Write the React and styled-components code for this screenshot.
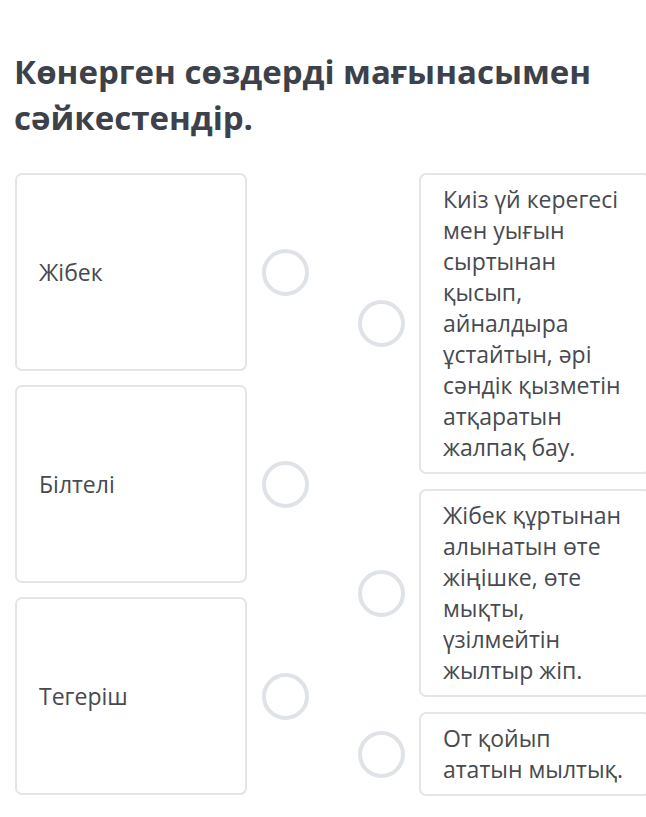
import React from 'react'
import styled, { createGlobalStyle } from 'styled-components'

const words = ['Жібек', 'Білтелі', 'Тегеріш']

const meanings = [
  'Киіз үй керегесі мен уығын сыртынан қысып, айналдыра ұстайтын, әрі сәндік қызметін атқаратын жалпақ бау.',
  'Жібек құртынан алынатын өте жіңішке, өте мықты, үзілмейтін жылтыр жіп.',
  'От қойып ататын мылтық.',
]

const App = () => {
  return (
    <Page>
      <GlobalStyle />
      <Title>Көнерген сөздерді мағынасымен сәйкестендір.</Title>
      <Board>
        <Column gap={14}>
          {words.map(word => (
            <LeftRow key={word}>
              <Card tall>
                <CardText>{word}</CardText>
              </Card>
              <Dot />
            </LeftRow>
          ))}
        </Column>
        <Column gap={15}>
          {meanings.map(text => (
            <RightRow key={text}>
              <Dot />
              <Card>
                <CardText>{text}</CardText>
              </Card>
            </RightRow>
          ))}
        </Column>
      </Board>
    </Page>
  )
}

export default App

const GlobalStyle = createGlobalStyle`
  html, body {
    margin: 0;
    padding: 0;
    background: #ffffff;
    overflow: hidden;
  }
  body {
    font-family: 'Open Sans', 'Noto Sans', sans-serif;
  }
`

const Page = styled.div`
  width: 680px;
  padding: 49px 0 0 15px;
`

const Title = styled.h1`
  margin: 0 0 32px -1px;
  width: 610px;
  font-size: 33px;
  line-height: 46px;
  font-weight: 700;
  color: #3d4149;
`

const Board = styled.div`
  display: flex;
  gap: 49px;
`

const Column = styled.div`
  display: flex;
  flex-direction: column;
  gap: ${p => p.gap}px;
`

const LeftRow = styled.div`
  display: flex;
  align-items: center;
  gap: 15px;
`

const RightRow = styled.div`
  display: flex;
  align-items: center;
  gap: 14px;
`

const Card = styled.div`
  box-sizing: border-box;
  width: 232px;
  min-height: ${p => (p.tall ? '198px' : '0')};
  display: flex;
  align-items: center;
  padding: 9px 20px 9px 22px;
  border: 2px solid #e4e5e7;
  border-radius: 7px;
  background: #ffffff;
`

const CardText = styled.div`
  font-size: 23px;
  line-height: 31px;
  color: #474a4f;
`

const Dot = styled.div`
  flex: none;
  box-sizing: border-box;
  width: 47px;
  height: 47px;
  border-radius: 50%;
  border: 4px solid #dfe3e7;
`
